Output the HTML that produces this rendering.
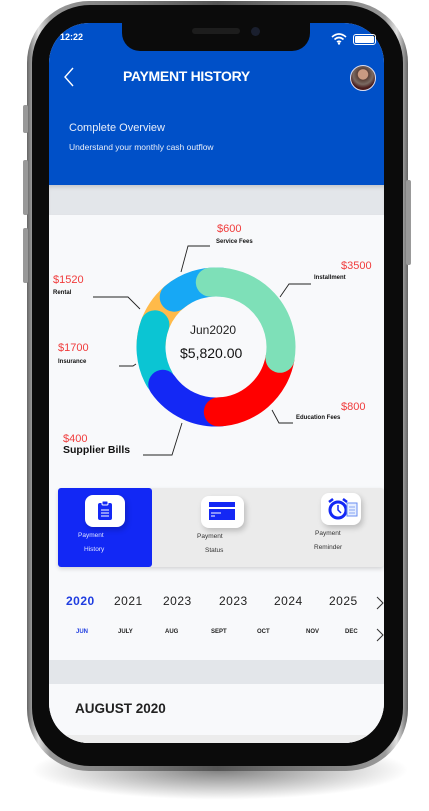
<!DOCTYPE html>
<html><head><meta charset="utf-8"><style>
*{margin:0;padding:0;box-sizing:border-box}
body{width:429px;height:811px;background:#fff;position:relative;overflow:hidden;font-family:"Liberation Sans",sans-serif}
.abs{position:absolute}
.t{position:absolute;white-space:nowrap}
</style></head><body>
<div class="abs" style="left:30px;top:740px;width:380px;height:60px;border-radius:50%;background:radial-gradient(ellipse at center,rgba(0,0,0,.5),rgba(0,0,0,0) 70%)"></div>
<div class="abs" style="left:27px;top:1px;width:381px;height:770px;border-radius:62px;background:linear-gradient(90deg,#666,#e0e0e0 3%,#999 6%,#555 50%,#999 94%,#e0e0e0 97%,#666);"></div>
<div class="abs" style="left:32px;top:5px;width:371px;height:761px;border-radius:58px;background:#0b0b0b"></div>
<div class="abs" style="left:23px;top:105px;width:5px;height:28px;background:#999;border-radius:2px"></div>
<div class="abs" style="left:23px;top:160px;width:5px;height:55px;background:#999;border-radius:2px"></div>
<div class="abs" style="left:23px;top:228px;width:5px;height:55px;background:#999;border-radius:2px"></div>
<div class="abs" style="left:406px;top:180px;width:5px;height:85px;background:#999;border-radius:2px"></div>
<div class="abs" style="left:49px;top:23px;width:335px;height:720px;border-radius:40px;overflow:hidden;background:#f8f9fb">
  <div class="abs" style="left:0;top:0;width:335px;height:162px;background:#0050c8"></div>
  <div class="abs" style="left:0;top:162px;width:335px;height:30px;background:#e3e6ea;box-shadow:inset 0 4px 4px -2px rgba(0,0,0,.15)"></div>
  <div class="abs" style="left:0;top:192px;width:335px;height:445px;background:#f8f9fb;box-shadow:0 3px 4px rgba(0,0,0,.15)"></div>
  <div class="abs" style="left:0;top:637px;width:335px;height:24px;background:#e3e6ea"></div>
  <div class="abs" style="left:0;top:661px;width:335px;height:60px;background:#f8f9fb"></div>
  <div class="abs" style="left:0;top:712px;width:335px;height:10px;background:#ececec"></div>
</div>
<div class="abs" style="left:122px;top:18px;width:188px;height:33px;background:#0b0b0b;border-radius:0 0 18px 18px"></div>
<div class="abs" style="left:192px;top:28px;width:48px;height:6px;background:#1d1d1d;border-radius:3px"></div>
<div class="abs" style="left:251px;top:27px;width:9px;height:9px;background:#1a1f2e;border-radius:50%"></div>
<div class="t" style="left:60px;top:32px;color:#fff;font-size:9px;font-weight:bold">12:22</div>
<svg class="abs" style="left:331px;top:32px" width="16" height="13" viewBox="0 0 16 13"><path d="M1 5Q8-1 15 5M3.5 7.5Q8 3.5 12.5 7.5M6 10Q8 8.5 10 10" stroke="#fff" stroke-width="1.6" fill="none"/><circle cx="8" cy="11.5" r="1.2" fill="#fff"/></svg>
<div class="abs" style="left:353px;top:34px;width:23px;height:11px;border:1.5px solid #fff;border-radius:3px;padding:1px"><div style="width:100%;height:100%;background:#fff;border-radius:1px"></div></div>
<svg class="abs" style="left:63px;top:67px" width="12" height="20"><path d="M10 1L2 10l8 9" stroke="#fff" stroke-width="1.4" fill="none"/></svg>
<div class="t" style="left:123px;top:68px;color:#fff;font-size:14px;font-weight:bold;letter-spacing:-.3px">PAYMENT HISTORY</div>
<div class="abs" style="left:350px;top:65px;width:26px;height:26px;border-radius:50%;border:1.5px solid #dde;background:radial-gradient(circle at 50% 35%,#c99a82 0 25%,#5a4038 28%,#7a6a62 50%,#4a1c1c 70%)"></div>
<div class="t" style="left:69px;top:122px;color:#e8eefa;font-size:11px">Complete Overview</div>
<div class="t" style="left:69px;top:142px;color:#e8eefa;font-size:8.5px">Understand your monthly cash outflow</div>
<svg class="abs" style="left:0;top:0" width="429" height="811">
<g fill="none" stroke-width="29" stroke-linecap="round">
<path d="M151 347A65 65 0 0 1 183.5 290.7" stroke="#ffba49"/>
<path d="M174.2 297.2A65 65 0 0 1 221.7 282.2" stroke="#17a8f5"/>
<path d="M159.7 379.5A65 65 0 0 1 154.9 324.8" stroke="#0bc5d3"/>
<path d="M221.7 411.8A65 65 0 0 1 162.8 384.3" stroke="#1428f5"/>
<path d="M280 358.3A65 65 0 0 1 218.3 411.9" stroke="#ff0000"/>
<path d="M210.3 282.2A65 65 0 0 1 280 358.3" stroke="#7ee0b8"/>
</g>
<g fill="none" stroke="#222" stroke-width="0.9">
<path d="M181 272L188 246H210"/>
<path d="M280 297L289 284H311"/>
<path d="M93 297H128L140 309"/>
<path d="M119 366H133L136 364"/>
<path d="M272 410L279 423H293"/>
<path d="M143 455H172L182 423"/>
</g>
</svg>
<div class="t" style="left:190px;top:323px;font-size:12px;color:#222">Jun2020</div>
<div class="t" style="left:180px;top:345px;font-size:14px;color:#111">$5,820.00</div>
<div class="t" style="left:217px;top:223px;font-size:11px;color:#f03c3c">$600</div>
<div class="t" style="left:216px;top:239px;font-size:6px;color:#111;font-weight:bold">Service Fees</div>
<div class="t" style="left:341px;top:260px;font-size:11px;color:#f03c3c">$3500</div>
<div class="t" style="left:314px;top:275px;font-size:6px;color:#111;font-weight:bold">Installment</div>
<div class="t" style="left:53px;top:274px;font-size:11px;color:#f03c3c">$1520</div>
<div class="t" style="left:53px;top:290px;font-size:6px;color:#111;font-weight:bold">Rental</div>
<div class="t" style="left:58px;top:342px;font-size:11px;color:#f03c3c">$1700</div>
<div class="t" style="left:58px;top:359px;font-size:6px;color:#111;font-weight:bold">Insurance</div>
<div class="t" style="left:341px;top:401px;font-size:11px;color:#f03c3c">$800</div>
<div class="t" style="left:296px;top:415px;font-size:6px;color:#111;font-weight:bold">Education Fees</div>
<div class="t" style="left:63px;top:433px;font-size:11px;color:#f03c3c">$400</div>
<div class="t" style="left:63px;top:444px;font-size:10.5px;color:#111;font-weight:bold">Supplier Bills</div>
<div class="abs" style="left:58px;top:488px;width:326px;height:79px;background:#ebebeb;border-radius:3px;box-shadow:0 2px 4px rgba(0,0,0,.15)"></div>
<div class="abs" style="left:58px;top:488px;width:94px;height:79px;background:#1228f5;border-radius:3px"></div>
<div class="abs" style="left:85px;top:495px;width:40px;height:32px;background:#fff;border-radius:8px;box-shadow:2px 3px 6px rgba(0,0,0,.2)"></div>
<svg class="abs" style="left:96px;top:500px" width="18" height="22"><rect x="2" y="3" width="14" height="17" rx="2" fill="#1428f5"/><rect x="6" y="1" width="6" height="4" rx="1" fill="#1428f5" stroke="#fff" stroke-width="1"/><path d="M5 10h8M5 13h8M5 16h8" stroke="#fff" stroke-width="1"/></svg>
<div class="abs" style="left:201px;top:496px;width:43px;height:32px;background:#fff;border-radius:8px;box-shadow:2px 3px 6px rgba(0,0,0,.2)"></div>
<svg class="abs" style="left:209px;top:502px" width="27" height="19"><rect x="0" y="0" width="26" height="5" fill="#1428f5"/><rect x="0" y="7" width="26" height="11" fill="#1428f5"/><path d="M2 11h10M2 14h4" stroke="#fff" stroke-width="1"/></svg>
<div class="abs" style="left:321px;top:493px;width:40px;height:32px;background:#fff;border-radius:8px;box-shadow:2px 3px 6px rgba(0,0,0,.2)"></div>
<svg class="abs" style="left:327px;top:497px" width="32" height="26"><circle cx="11" cy="13" r="8" fill="none" stroke="#1428f5" stroke-width="3"/><path d="M11 8v5l3 3" stroke="#1428f5" stroke-width="1.5" fill="none"/><path d="M2 5l4-3M20 5l-4-3" stroke="#1428f5" stroke-width="2.5"/><rect x="20" y="6" width="10" height="13" fill="#e6eeff" stroke="#6a8ef0" stroke-width="1"/><path d="M22 10h6M22 13h6M22 16h6" stroke="#6a8ef0" stroke-width=".8"/></svg>
<div class="t" style="left:78px;top:532px;font-size:6.5px;color:#dfe4ff">Payment</div>
<div class="t" style="left:84px;top:546px;font-size:6.5px;color:#dfe4ff">History</div>
<div class="t" style="left:197px;top:533px;font-size:6.5px;color:#333">Payment</div>
<div class="t" style="left:205px;top:547px;font-size:6.5px;color:#333">Status</div>
<div class="t" style="left:315px;top:530px;font-size:6.5px;color:#333">Payment</div>
<div class="t" style="left:314px;top:544px;font-size:6.5px;color:#333">Reminder</div>
<div class="t" style="left:66px;top:594px;font-size:12px;font-weight:bold;color:#1f3de0;letter-spacing:.5px">2020</div>
<div class="t" style="left:114px;top:594px;font-size:12px;color:#222;letter-spacing:.5px">2021</div>
<div class="t" style="left:163px;top:594px;font-size:12px;color:#222;letter-spacing:.5px">2023</div>
<div class="t" style="left:219px;top:594px;font-size:12px;color:#222;letter-spacing:.5px">2023</div>
<div class="t" style="left:274px;top:594px;font-size:12px;color:#222;letter-spacing:.5px">2024</div>
<div class="t" style="left:329px;top:594px;font-size:12px;color:#222;letter-spacing:.5px">2025</div>
<div class="t" style="left:76px;top:629px;font-size:6px;font-weight:bold;color:#1f3de0">JUN</div>
<div class="t" style="left:118px;top:629px;font-size:6px;font-weight:bold;color:#222">JULY</div>
<div class="t" style="left:165px;top:629px;font-size:6px;font-weight:bold;color:#222">AUG</div>
<div class="t" style="left:211px;top:629px;font-size:6px;font-weight:bold;color:#222">SEPT</div>
<div class="t" style="left:257px;top:629px;font-size:6px;font-weight:bold;color:#222">OCT</div>
<div class="t" style="left:306px;top:629px;font-size:6px;font-weight:bold;color:#222">NOV</div>
<div class="t" style="left:345px;top:629px;font-size:6px;font-weight:bold;color:#222">DEC</div>
<svg class="abs" style="left:376px;top:596px" width="8" height="50"><path d="M1 1l6 6-6 6M1 33l6 6-6 6" stroke="#333" stroke-width="1" fill="none"/></svg>
<div class="t" style="left:75px;top:701px;font-size:13.5px;color:#222;font-weight:bold">AUGUST 2020</div>
</body></html>
